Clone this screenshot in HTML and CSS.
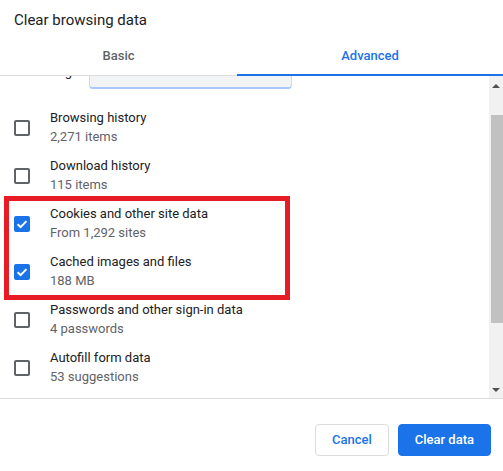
FILE: index.html
```html
<!DOCTYPE html>
<html lang="en">
<head>
<meta charset="utf-8">
<title>Clear browsing data</title>
<link rel="stylesheet" href="styles.css">
</head>
<body>
<div class="dialog">
  <div class="title">Clear browsing data</div>
  <div class="tabs">
    <div class="tab">Basic</div>
    <div class="tab tab-active">Advanced</div>
  </div>
  <div class="scroll-area">
    <div class="list">
      <div class="list-inner">
        <div class="time-row">
          <span class="time-label">Time range</span>
          <div class="select"></div>
        </div>
        <div class="row">
          <span class="box"></span>
          <div class="text"><div class="t1">Browsing history</div><div class="t2">2,271 items</div></div>
        </div>
        <div class="row">
          <span class="box"></span>
          <div class="text"><div class="t1">Download history</div><div class="t2">115 items</div></div>
        </div>
        <div class="row">
          <svg class="check" width="16" height="16" viewBox="0 0 16 16"><rect width="16" height="16" rx="2" fill="#1a73e8"/><path d="M3.6 8.3 L6.6 11.1 L12.4 5.1" fill="none" stroke="#fff" stroke-width="2"/></svg>
          <div class="text"><div class="t1">Cookies and other site data</div><div class="t2">From 1,292 sites</div></div>
        </div>
        <div class="row">
          <svg class="check" width="16" height="16" viewBox="0 0 16 16"><rect width="16" height="16" rx="2" fill="#1a73e8"/><path d="M3.6 8.3 L6.6 11.1 L12.4 5.1" fill="none" stroke="#fff" stroke-width="2"/></svg>
          <div class="text"><div class="t1">Cached images and files</div><div class="t2">188 MB</div></div>
        </div>
        <div class="row">
          <span class="box"></span>
          <div class="text"><div class="t1">Passwords and other sign-in data</div><div class="t2">4 passwords</div></div>
        </div>
        <div class="row">
          <span class="box"></span>
          <div class="text"><div class="t1">Autofill form data</div><div class="t2">53 suggestions</div></div>
        </div>
      </div>
    </div>
    <div class="scrollbar">
      <div class="sb-btn"><span class="arrow-up"></span></div>
      <div class="sb-track">
        <div class="sb-thumb"></div>
      </div>
      <div class="sb-btn"><span class="arrow-down"></span></div>
    </div>
  </div>
  <div class="footer">
    <button class="btn btn-cancel">Cancel</button>
    <button class="btn btn-primary">Clear data</button>
  </div>
  <div class="highlight"></div>
</div>
</body>
</html>
```

FILE: styles.css
```css
* { box-sizing: border-box; }
html, body {
  margin: 0;
  padding: 0;
  background: #fff;
}
body {
  font-family: Roboto, "Liberation Sans", Arial, sans-serif;
  font-size: 13px;
  color: #202124;
}
.dialog {
  position: relative;
  width: 503px;
  height: 471px;
  display: flex;
  flex-direction: column;
  overflow: hidden;
}
.title {
  padding: 10px 14px 0 14px;
  font-size: 15px;
  line-height: 20px;
  color: #202124;
}
.tabs {
  display: flex;
  margin-top: 6px;
  height: 40px;
  border-bottom: 1px solid #dadce0;
}
.tab {
  position: relative;
  display: flex;
  align-items: center;
  justify-content: center;
  width: 237px;
  font-weight: 500;
  color: #5f6368;
  line-height: 20px;
}
.tab-active {
  flex: 1;
  color: #1a73e8;
}
.tab-active::after {
  content: "";
  position: absolute;
  left: 0;
  right: 0;
  bottom: -1px;
  height: 2px;
  background: #1a73e8;
}
.scroll-area {
  flex: 1;
  display: flex;
  min-height: 0;
}
.list {
  flex: 1;
  overflow: hidden;
}
.list-inner {
  margin-top: -21px;
}
.time-row {
  display: flex;
  align-items: center;
  height: 34px;
  padding-left: 14px;
}
.time-label {
  width: 75px;
  line-height: 20px;
  color: #202124;
}
.select {
  width: 203px;
  height: 34px;
  background: #f1f3f4;
  border-radius: 4px;
  border-bottom: 2px solid #a8c7fa;
  border-right: 1px solid #c6dafc;
  border-left: 1px solid #c6dafc;
}
.row {
  display: flex;
  align-items: center;
  height: 48px;
  padding-left: 14px;
}
.time-row + .row { margin-top: 15px; }
.box {
  width: 16px;
  height: 16px;
  border: 2px solid #5f6368;
  border-radius: 2px;
  flex: none;
}
.check { flex: none; display: block; }
.text {
  margin-left: 20px;
  padding-bottom: 3px;
}
.t1 {
  line-height: 20px;
  color: #202124;
}
.t2 {
  line-height: 17px;
  color: #5f6368;
}
.scrollbar {
  width: 14px;
  background: #f1f1f1;
  display: flex;
  flex-direction: column;
}
.sb-btn {
  height: 17px;
  display: flex;
  align-items: center;
  justify-content: center;
}
.arrow-up {
  width: 0;
  height: 0;
  border-left: 4px solid transparent;
  border-right: 4px solid transparent;
  border-bottom: 4px solid #505050;
  margin-top: 2px;
}
.arrow-down {
  width: 0;
  height: 0;
  border-left: 4px solid transparent;
  border-right: 4px solid transparent;
  border-top: 4px solid #505050;
}
.sb-track {
  flex: 1;
  padding-top: 22px;
}
.sb-thumb {
  margin-left: 2px;
  height: 208px;
  background: #c1c1c1;
}
.footer {
  height: 73px;
  border-top: 1px solid #dadce0;
  display: flex;
  justify-content: flex-end;
  align-items: flex-start;
  gap: 9px;
  padding: 25px 12px 0 0;
}
.btn {
  height: 32px;
  padding: 0 16px;
  border-radius: 4px;
  font-family: Roboto, "Liberation Sans", Arial, sans-serif;
  font-size: 13px;
  font-weight: 500;
  line-height: 30px;
  cursor: pointer;
}
.btn-cancel {
  background: #fff;
  border: 1px solid #dadce0;
  color: #1a73e8;
}
.btn-primary {
  background: #1a73e8;
  border: 1px solid #1a73e8;
  color: #fff;
}
.highlight {
  position: absolute;
  left: 4px;
  top: 196px;
  width: 286px;
  height: 104px;
  border: 5px solid #e81c24;
  pointer-events: none;
}
```
